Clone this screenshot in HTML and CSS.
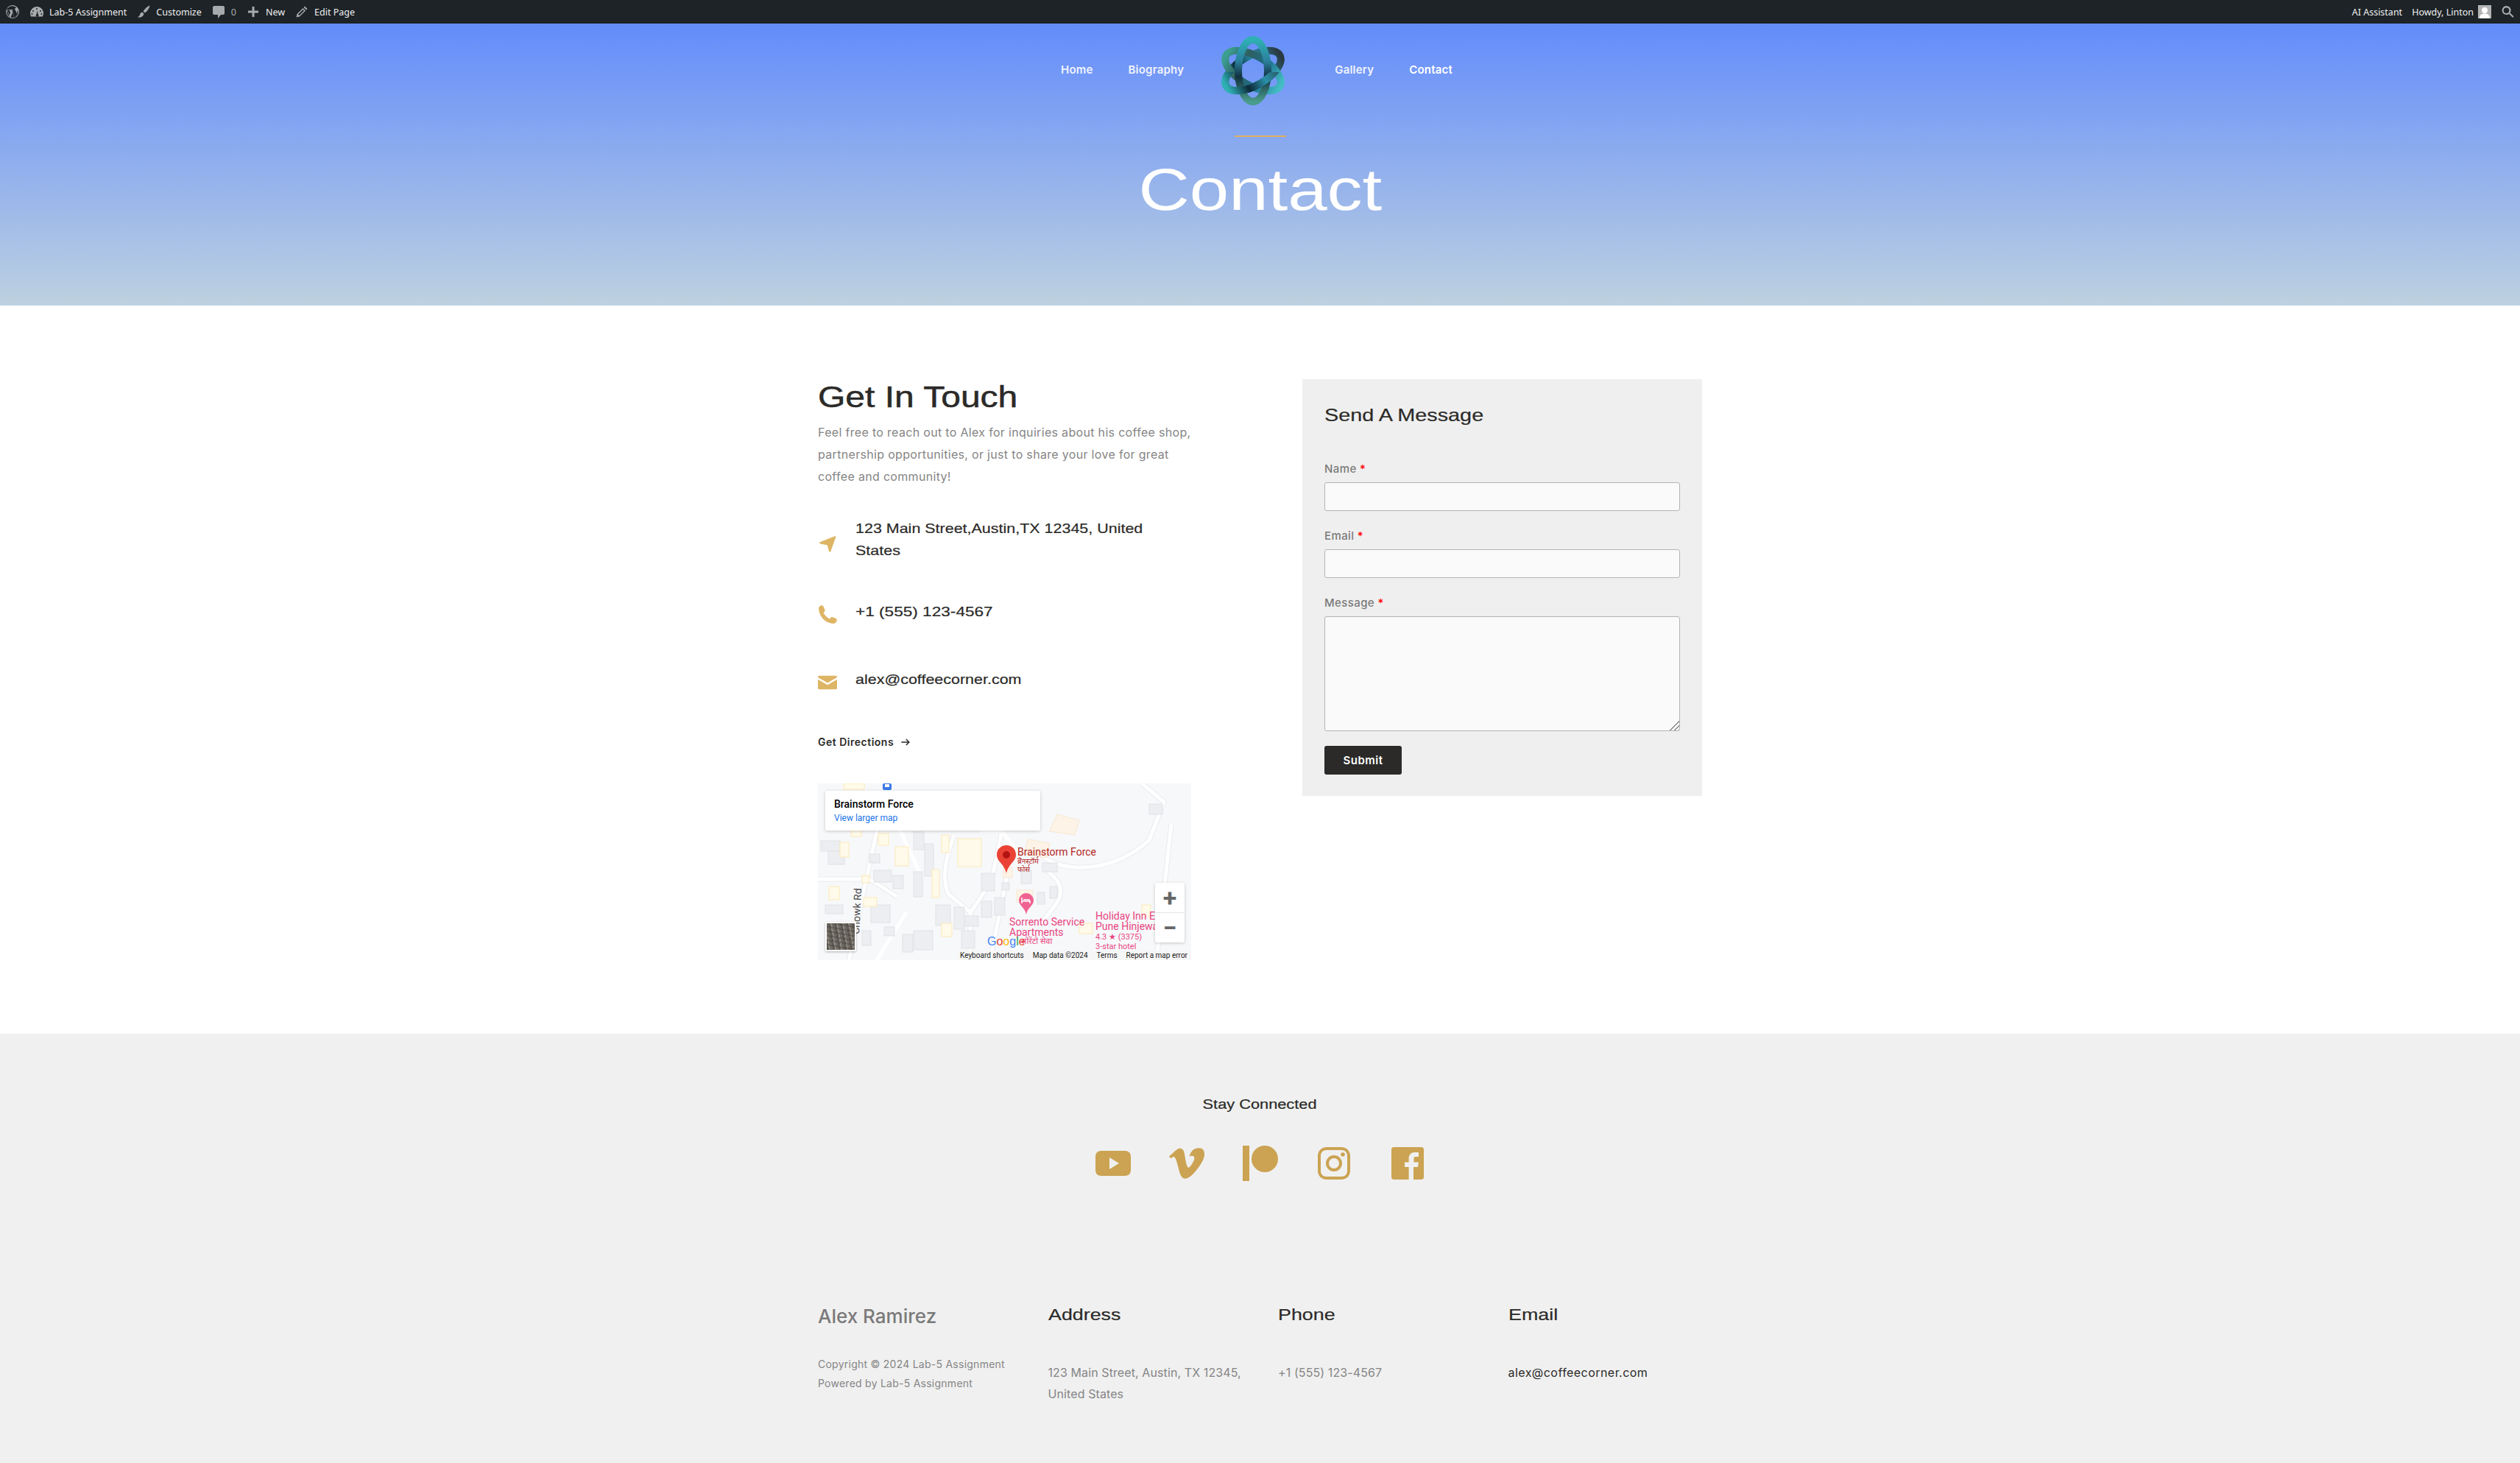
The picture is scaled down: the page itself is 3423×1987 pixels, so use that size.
FILE: index.html
```html
<!DOCTYPE html>
<html lang="en">
<head>
    <meta charset="UTF-8">
    <meta name="viewport" content="width=device-width, initial-scale=1.0">
    <title>Contact</title>
    <link rel="stylesheet" href="styles.css">
</head>
<body>
    <div class="adminbar">
        <div class="admin-group">
            <svg class="wp-logo" viewBox="0 0 20 20"><path d="M10 1a9 9 0 1 0 0 18 9 9 0 0 0 0-18zm0 1.200c2 0 3.900.8 5.300 2-1.200 0-2 1-2 2.100 0 1 .6 1.800 1.200 2.800.5.800.9 1.800.9 3.200 0 1-.4 2.100-.9 3.700l-1.100 3.600-3.900-11.700.9-.1c.5-.1.400-.8-.1-.7l-2.500.1-2.500-.1c-.5 0-.6.700-.1.700l.8.1 1.200 3.200-1.700 5-2.800-8.200.9-.1c.5-.1.400-.8-.1-.7l-2.400.1C4.800 3.500 7.200 2.200 10 2.200zM2.200 10c0-1.100.2-2.200.7-3.200l3.700 10.200A7.800 7.800 0 0 1 2.200 10zm7.900 1l2.400 6.500a7.800 7.800 0 0 1-4.900.1zm7-4.200a7.800 7.800 0 0 1-2.900 9.800l2.400-6.900c.4-1.100.6-2 .6-2.800l-.1-.1z"/></svg>
            <span class="admin-item">
                <svg class="admin-icon" viewBox="0 0 20 20"><path d="M10 3a9 9 0 0 0-9 9c0 1.700.4 3.200 1.200 4.500h15.600A9 9 0 0 0 10 3zm0 2a1 1 0 1 1 0 2 1 1 0 0 1 0-2zM5 8a1 1 0 1 1 0 2 1 1 0 0 1 0-2zm10 0a1 1 0 1 1 0 2 1 1 0 0 1 0-2zM3.500 12a1 1 0 1 1 0 2 1 1 0 0 1 0-2zm13 0a1 1 0 1 1 0 2 1 1 0 0 1 0-2zM11 8l.5 5.200a1.800 1.800 0 1 1-2 .2z"/></svg>
                Lab-5 Assignment
            </span>
            <span class="admin-item">
                <svg class="admin-icon" viewBox="0 0 20 20"><path d="M18.500 1.500c-3 1-7 4.500-9 8l2.500 2c3-2.500 6-6.500 6.500-10zM8.500 10.500c-2 .3-3 1.500-3.500 3.500-.3 1.500-1.500 2.500-3 3 3 1.500 7 .5 8.500-4z"/></svg>
                Customize
            </span>
            <span class="admin-item">
                <svg class="admin-icon" viewBox="0 0 20 20"><path d="M4 2h12c1 0 2 1 2 2v8c0 1-1 2-2 2h-3l-4 5v-5H4c-1 0-2-1-2-2V4c0-1 1-2 2-2z"/></svg>
                <span class="admin-count">0</span>
            </span>
            <span class="admin-item">
                <svg class="admin-icon" viewBox="0 0 20 20"><path d="M8.500 3h3v5.500H17v3h-5.500V17h-3v-5.500H3v-3h5.500z"/></svg>
                New
            </span>
            <span class="admin-item">
                <svg class="admin-icon" viewBox="0 0 20 20"><path d="M14 2.500l3.500 3.500-1.500 1.500L12.500 4zM11.500 5l3.500 3.500-8 8-4.500 1 1-4.500zM5 13.500l1.500 1.500 6.500-6.500-1.500-1.500z" fill-rule="evenodd"/></svg>
                Edit Page
            </span>
        </div>
        <div class="admin-group">
            <span class="admin-item">AI Assistant</span>
            <span class="admin-item howdy">Howdy, Linton
                <svg class="avatar" viewBox="0 0 18 18"><rect width="18" height="18" fill="#b4b4b4"/><circle cx="9" cy="7" r="4" fill="#fff"/><path d="M2 18c0-5 3-6.500 7-6.500s7 1.500 7 6.500z" fill="#fff"/></svg>
            </span>
            <svg class="admin-icon search" viewBox="0 0 20 20"><path d="M12.100 12.900a6 6 0 1 1 1.400-1.400l4.500 4.200a1 1 0 0 1-1.500 1.600zM8.500 12a3.800 3.800 0 1 0 0-7.600 3.800 3.800 0 0 0 0 7.600z" fill-rule="evenodd"/></svg>
        </div>
    </div>

    <header class="hero">
        <nav class="main-nav">
            <a href="#">Home</a>
            <a href="#">Biography</a>
            <svg class="logo" viewBox="0 0 92 96">
                <defs>
                    <linearGradient id="knotA" x1="0" y1="0" x2="0" y2="1">
                        <stop offset="0" stop-color="#2fb0b5"/>
                        <stop offset="0.35" stop-color="#2a7f9c"/>
                        <stop offset="0.6" stop-color="#12303f"/>
                        <stop offset="1" stop-color="#4a9c8c"/>
                    </linearGradient>
                    <linearGradient id="knotB" x1="0" y1="0" x2="0" y2="1">
                        <stop offset="0" stop-color="#3c9f92"/>
                        <stop offset="0.3" stop-color="#2e5f60"/>
                        <stop offset="0.65" stop-color="#1c6f8c"/>
                        <stop offset="1" stop-color="#43bcc4"/>
                    </linearGradient>
                    <linearGradient id="knotC" x1="0" y1="0" x2="0" y2="1">
                        <stop offset="0" stop-color="#2a3a42"/>
                        <stop offset="0.4" stop-color="#2a8fa8"/>
                        <stop offset="0.7" stop-color="#0d2a38"/>
                        <stop offset="1" stop-color="#2fb0b5"/>
                    </linearGradient>
                    <clipPath id="knotClip">
                        <rect x="0" y="50" width="92" height="46"/>
                    </clipPath>
                </defs>
                <g fill="none" stroke-width="10">
                    <ellipse cx="46" cy="48" rx="20" ry="42" stroke="url(#knotC)" transform="rotate(60 46 48)"/>
                    <ellipse cx="46" cy="48" rx="20" ry="42" stroke="url(#knotB)" transform="rotate(-60 46 48)"/>
                    <ellipse cx="46" cy="48" rx="20" ry="42" stroke="url(#knotA)"/>
                    <g clip-path="url(#knotClip)">
                        <ellipse cx="46" cy="48" rx="20" ry="42" stroke="url(#knotC)" transform="rotate(60 46 48)"/>
                    </g>
                </g>
            </svg>
            <a href="#" class="after-logo">Gallery</a>
            <a href="#" class="current">Contact</a>
        </nav>
        <div class="hero-line"></div>
        <h1 class="hero-title">Contact</h1>
    </header>

    <main class="contact">
        <section class="contact-left">
            <h2 class="touch-title">Get In Touch</h2>
            <p class="touch-text">Feel free to reach out to Alex for inquiries about his coffee shop,<br>partnership opportunities, or just to share your love for great<br>coffee and community!</p>

            <div class="info-row row-address">
                <svg class="info-icon" viewBox="0 0 24 24"><path d="M3 10.500L21.500 3 15 21l-2.500-8.500z" stroke-width="2" stroke-linejoin="round"/></svg>
                <div class="info-text">123 Main Street,Austin,TX 12345, United<br>States</div>
            </div>
            <div class="info-row row-phone">
                <svg class="info-icon" viewBox="0 0 24 24"><path d="M1 4C1 2 2.500.6 4.500.3c1-.1 2 .3 2.400 1.200l1.800 4c.4.9.2 1.800-.5 2.500L7 9.500c1.300 3 4 5.600 7.500 7.500l1.600-1.600c.7-.7 1.600-.9 2.500-.5l4 1.800c.9.400 1.400 1.300 1.200 2.300-.3 2.200-2 4-4.300 4C9.500 23 1 13.500 1 4z"/></svg>
                <div class="info-text">+1 (555) 123-4567</div>
            </div>
            <div class="info-row row-email">
                <svg class="info-icon" viewBox="0 0 24 24"><path d="M1.500 3.500h21c.8 0 1.500.7 1.500 1.500v.5l-12 7-12-7V5c0-.8.700-1.500 1.500-1.500zM0 8l12 7 12-7v11c0 .8-.7 1.500-1.500 1.500h-21C.7 20.500 0 19.800 0 19z"/></svg>
                <div class="info-text">alex@coffeecorner.com</div>
            </div>

            <a href="#" class="directions">Get Directions
                <svg viewBox="0 0 16 16"><path d="M1.500 8h12M9 3.500L13.500 8 9 12.500" fill="none" stroke="#2b2b2b" stroke-width="1.700"/></svg>
            </a>

            <div class="map">
                <svg class="map-svg" viewBox="0 0 507 240">
                    <rect width="507" height="240" fill="#f7f8fa"/>
                    <!-- roads -->
                    <g fill="none" stroke="#e9ebee" stroke-width="7">
                        <path d="M82 55L42 240"/>
                        <path d="M0 130h70l38 24"/>
                        <path d="M185 70c-10 28-18 55-8 80l30 25v65"/>
                        <path d="M207 175c15-20 28-40 32-58 4-22 14-50 8-62"/>
                        <path d="M258 120l-24 120"/>
                        <path d="M310 118c40 28 10 48-10 76"/>
                        <path d="M300 95c30 28 100 28 150-18l20-52-30-25"/>
                        <path d="M480 55l-20 185"/>
                    </g>
                    <g fill="none" stroke="#fff" stroke-width="5">
                        <path d="M82 55L42 240"/>
                        <path d="M0 130h70l38 24"/>
                        <path d="M185 70c-10 28-18 55-8 80l30 25v65"/>
                        <path d="M207 175c15-20 28-40 32-58 4-22 14-50 8-62"/>
                        <path d="M258 120l-24 120"/>
                        <path d="M310 118c40 28 10 48-10 76"/>
                        <path d="M300 95c30 28 100 28 150-18l20-52-30-25"/>
                        <path d="M480 55l-20 185"/>
                        <path d="M140 125l-30-65M120 175l-40 65"/>
                        <path d="M220 65h30l20 28"/>
                    </g>
                    <!-- plain buildings -->
                    <g fill="#eceef1" stroke="#dfe1e5" stroke-width="1">
                        <rect x="4" y="78" width="26" height="14"/><rect x="14" y="92" width="22" height="18"/>
                        <rect x="76" y="118" width="24" height="16"/><rect x="72" y="165" width="26" height="24"/>
                        <rect x="130" y="120" width="12" height="34"/><rect x="145" y="82" width="12" height="44"/>
                        <rect x="222" y="122" width="18" height="24"/><rect x="222" y="160" width="14" height="22"/>
                        <rect x="240" y="155" width="14" height="24"/><rect x="200" y="180" width="18" height="14"/>
                        <rect x="185" y="168" width="14" height="30"/><rect x="160" y="165" width="20" height="28"/>
                        <rect x="130" y="200" width="26" height="26"/><rect x="115" y="205" width="14" height="24"/>
                        <rect x="195" y="200" width="18" height="24"/><rect x="305" y="108" width="20" height="12"/>
                        <rect x="298" y="148" width="10" height="16"/><rect x="315" y="140" width="10" height="16"/>
                        <rect x="450" y="28" width="18" height="14"/><rect x="150" y="15" width="14" height="38"/>
                        <rect x="130" y="66" width="14" height="24"/><rect x="10" y="165" width="24" height="12"/>
                        <rect x="70" y="96" width="14" height="12"/><rect x="102" y="125" width="14" height="18"/>
                        <rect x="276" y="118" width="14" height="18"/><rect x="60" y="200" width="12" height="20"/>
                        <rect x="90" y="195" width="14" height="12"/><rect x="250" y="135" width="10" height="10"/>
                    </g>
                    <!-- yellow buildings -->
                    <g fill="#fffae9" stroke="#fbe9b8" stroke-width="1">
                        <rect x="190" y="75" width="32" height="38"/><rect x="105" y="86" width="18" height="26"/>
                        <rect x="82" y="68" width="14" height="16"/><rect x="30" y="80" width="12" height="20"/>
                        <rect x="155" y="117" width="10" height="38"/><rect x="168" y="70" width="10" height="24"/>
                        <rect x="62" y="155" width="18" height="12"/><rect x="15" y="140" width="14" height="18"/>
                        <rect x="168" y="190" width="14" height="18"/><rect x="440" y="165" width="12" height="16"/>
                        <rect x="355" y="190" width="18" height="14"/><rect x="35" y="0" width="28" height="8"/>
                        <rect x="45" y="62" width="14" height="10"/><rect x="60" y="125" width="10" height="10"/>
                    </g>
                    <g fill="#fdf3e6" stroke="#f7e8d3" stroke-width="1">
                        <path d="M325 42l30 8-6 20-35-5zM285 76l-5 20 30 5 5-20z"/>
                        <rect x="252" y="114" width="12" height="14"/>
                        <rect x="270" y="145" width="22" height="16"/>
                    </g>

                    <!-- pins and labels -->
                    <path d="M256 84c-7.500 0-13 5.500-13 13 0 9 10 12 13 25 3-13 13-16 13-25 0-7.500-5.500-13-13-13z" fill="#ea4335"/>
                    <circle cx="256" cy="97" r="5" fill="#b31412"/>
                    <text class="map-red" x="271" y="98">Brainstorm Force</text>
                    <text class="map-red-small" x="271" y="109">ब्रेनस्टॉर्म</text>
                    <text class="map-red-small" x="271" y="120">फोर्स</text>

                    <path d="M283 149c-5.500 0-10 4.500-10 10 0 7 8 9 10 19 2-10 10-12 10-19 0-5.500-4.500-10-10-10z" fill="#f06292"/>
                    <path d="M277 155v8M277 160h11v3M279 158h8v2" fill="none" stroke="#fff" stroke-width="1.500"/>
                    <text class="map-pink" x="260" y="193">Sorrento Service</text>
                    <text class="map-pink" x="260" y="207">Apartments</text>
                    <text class="map-pink-small" x="276" y="218">सोरेंटो सेवा</text>
                    <text class="map-pink" x="377" y="185">Holiday Inn E</text>
                    <text class="map-pink" x="377" y="199">Pune Hinjewa</text>
                    <text class="map-pink-small" x="377" y="212">4.3 ★ (3375)</text>
                    <text class="map-pink-small" x="377" y="225">3-star hotel</text>
                    <text class="map-road" transform="translate(56 205) rotate(-87)">Chowk Rd</text>
                    <rect x="88" y="0" width="12" height="9" rx="2" fill="#3b78e7"/>
                    <rect x="91" y="1" width="6" height="4" fill="#fff"/>
                </svg>
                <div class="map-card">
                    <strong>Brainstorm Force</strong>
                    <a href="#">View larger map</a>
                </div>
                <div class="map-zoom">
                    <span>+</span>
                    <span>−</span>
                </div>
                <div class="map-thumb"></div>
                <div class="map-google"><b class="g-blue">G</b><b class="g-red">o</b><b class="g-yellow">o</b><b class="g-blue">g</b><b class="g-green">l</b><b class="g-red">e</b></div>
                <div class="map-foot">
                    <span>Keyboard shortcuts</span>
                    <span>Map data ©2024</span>
                    <span>Terms</span>
                    <span>Report a map error</span>
                </div>
            </div>
        </section>

        <section class="contact-form">
            <h3 class="form-title">Send A Message</h3>
            <form>
                <label for="name">Name <em>*</em></label>
                <input type="text" id="name">
                <label for="email">Email <em>*</em></label>
                <input type="email" id="email">
                <label for="message">Message <em>*</em></label>
                <textarea id="message"></textarea>
                <button type="submit" class="submit-btn">Submit</button>
            </form>
        </section>
    </main>

    <footer class="site-footer">
        <h4 class="stay-title">Stay Connected</h4>
        <div class="socials">
            <svg viewBox="0 0 48 48"><path fill-rule="evenodd" d="M8 7h32c5 0 8 3 8 8v18c0 5-3 8-8 8H8c-5 0-8-3-8-8V15c0-5 3-8 8-8zm11 9v16l13-8z"/></svg>
            <svg viewBox="0 0 24 24"><path d="M23.977 6.417c-.105 2.338-1.739 5.543-4.894 9.609-3.268 4.247-6.026 6.370-8.290 6.370-1.409 0-2.578-1.294-3.553-3.881l-1.918-7.114c-.719-2.584-1.488-3.878-2.312-3.878-.179 0-.806.378-1.881 1.132L0 7.223c1.185-1.044 2.351-2.084 3.501-3.128C5.080 2.701 6.266 1.974 7.055 1.900 8.920 1.721 10.073 3 10.504 5.731c.465 2.947.789 4.780.971 5.500.539 2.448 1.131 3.670 1.776 3.670.502 0 1.256-.796 2.263-2.385 1.004-1.589 1.540-2.797 1.612-3.628.144-1.371-.395-2.061-1.614-2.061-.574 0-1.167.121-1.777.391 1.186-3.868 3.434-5.757 6.762-5.637 2.473.060 3.628 1.664 3.493 4.797z"/></svg>
            <svg viewBox="0 0 48 48"><rect x="0" y="0" width="9" height="48"/><circle cx="30" cy="18" r="18"/></svg>
            <svg viewBox="0 0 48 48"><path fill-rule="evenodd" d="M14 2h20c7 0 12 5 12 12v20c0 7-5 12-12 12H14C7 46 2 41 2 34V14C2 7 7 2 14 2zm0 4c-5 0-8 3-8 8v20c0 5 3 8 8 8h20c5 0 8-3 8-8V14c0-5-3-8-8-8z"/><path fill-rule="evenodd" d="M24 13a11 11 0 1 1 0 22 11 11 0 0 1 0-22zm0 4a7 7 0 1 0 0 14 7 7 0 0 0 0-14z"/><circle cx="36" cy="12" r="2.800"/></svg>
            <svg viewBox="0 0 24 24"><path d="M21.500 1h-19C1.700 1 1 1.700 1 2.500v19c0 .8.700 1.500 1.500 1.500h10.300v-8.500H10v-3.300h2.800V8.800c0-2.800 1.700-4.300 4.200-4.300 1.200 0 2.200.1 2.500.1v2.900h-1.700c-1.400 0-1.600.6-1.600 1.600v2.100h3.200l-.4 3.300H16V23h5.500c.8 0 1.500-.7 1.500-1.500v-19c0-.8-.7-1.500-1.500-1.500z"/></svg>
        </div>
        <div class="footer-cols">
            <div class="footer-col">
                <div class="footer-brand">Alex Ramirez</div>
                <p class="copy">Copyright © 2024 Lab-5 Assignment<br>Powered by Lab-5 Assignment</p>
            </div>
            <div class="footer-col">
                <h5 class="footer-head">Address</h5>
                <p class="footer-text">123 Main Street, Austin, TX 12345,<br>United States</p>
            </div>
            <div class="footer-col">
                <h5 class="footer-head">Phone</h5>
                <p class="footer-text">+1 (555) 123-4567</p>
            </div>
            <div class="footer-col">
                <h5 class="footer-head">Email</h5>
                <p class="footer-text dark">alex@coffeecorner.com</p>
            </div>
        </div>
    </footer>
</body>
</html>
```

FILE: styles.css
```css
* {
    box-sizing: border-box;
}
body {
    margin: 0;
    font-family: Inter, "Open Sans", sans-serif;
    background: #fff;
    color: #2b2a28;
}

/* admin bar */
.adminbar {
    display: flex;
    justify-content: space-between;
    align-items: center;
    height: 32px;
    background: #1d2327;
    color: #f0f0f1;
    font-family: "Noto Sans", sans-serif;
    font-size: 12.5px;
    padding: 0 7px;
}
.admin-group {
    display: flex;
    align-items: center;
}
.admin-item {
    display: flex;
    align-items: center;
    gap: 7px;
    margin-left: 13px;
    white-space: nowrap;
}
.admin-icon {
    width: 20px;
    height: 20px;
    fill: #a7aaad;
}
.wp-logo {
    width: 20px;
    height: 20px;
    fill: #a7aaad;
}
.admin-count {
    color: #a7aaad;
}
.avatar {
    width: 18px;
    height: 18px;
    margin-left: -1px;
}
.search {
    margin-left: 12px;
}

/* hero */
.hero {
    height: 383px;
    background: linear-gradient(180deg, #638cfb 0%, #bdd1e0 100%);
    color: #fff;
    padding-top: 16px;
}
.main-nav {
    display: flex;
    justify-content: center;
    align-items: center;
    gap: 48px;
    padding-right: 9px;
    height: 96px;
}
.main-nav a {
    color: #f0f3fd;
    text-decoration: none;
    font-size: 15px;
    font-weight: 600;
    letter-spacing: 0.2px;
    margin-bottom: 3px;
}
.main-nav a.current {
    color: #fff;
}
.main-nav a.after-logo {
    margin-left: 17px;
}
.logo {
    width: 92px;
    height: 96px;
}
.hero-line {
    width: 70px;
    height: 2px;
    background: #e0b060;
    margin: 40px auto 0;
}
.hero-title {
    width: fit-content;
    margin: 26px auto 0;
    font-family: "Liberation Sans", Arial, sans-serif;
    font-size: 80px;
    line-height: 92px;
    font-weight: 400;
    transform: scaleX(1.2);
}

/* contact */
.contact {
    display: flex;
    justify-content: space-between;
    width: 1201px;
    margin: 0 auto;
    padding: 100px 0;
    height: 989px;
}
.contact-left {
    width: 507px;
}
.touch-title {
    margin: 0;
    font-family: "Liberation Sans", Arial, sans-serif;
    font-size: 40px;
    line-height: 48px;
    font-weight: 400;
    -webkit-text-stroke: 0.5px #2b2a28;
    transform: scaleX(1.2);
    transform-origin: left center;
}
.touch-text {
    margin: 9px 0 0;
    font-size: 16px;
    line-height: 30px;
    font-weight: 400;
    letter-spacing: 0.32px;
    color: #858585;
    white-space: nowrap;
}
.info-row {
    display: flex;
    align-items: center;
    gap: 25px;
}
.row-address {
    margin-top: 41px;
}
.row-phone {
    margin-top: 53px;
    align-items: flex-start;
}
.row-email {
    margin-top: 60px;
    align-items: flex-start;
}
.info-icon {
    width: 26px;
    height: 26px;
    flex: none;
    fill: #deb565;
    stroke: #deb565;
    stroke-width: 0;
}
.row-address .info-icon {
    stroke-width: 2;
    margin-top: 12px;
}
.row-phone .info-icon,
.row-email .info-icon {
    margin-top: 6px;
}
.info-text {
    font-family: "Liberation Sans", Arial, sans-serif;
    font-size: 19px;
    line-height: 30px;
    -webkit-text-stroke: 0.2px #2b2a28;
    white-space: nowrap;
    transform: scaleX(1.13);
    transform-origin: left center;
}
.row-phone .info-text {
    transform: scaleX(1.19);
}
.directions {
    display: flex;
    align-items: center;
    gap: 9px;
    margin-top: 58px;
    color: #2b2a28;
    text-decoration: none;
    font-size: 14px;
    font-weight: 600;
    letter-spacing: 0.5px;
    line-height: 20px;
}
.directions svg {
    width: 14px;
    height: 14px;
}

/* map */
.map {
    position: relative;
    width: 507px;
    height: 240px;
    margin-top: 46px;
    overflow: hidden;
    font-family: Roboto, sans-serif;
}
.map-svg {
    display: block;
    width: 507px;
    height: 240px;
    font-family: Roboto, "Noto Sans", sans-serif;
}
.map-red {
    font-size: 14px;
    fill: #b3261e;
}
.map-red-small {
    font-size: 10px;
    fill: #b3261e;
}
.map-pink {
    font-size: 14px;
    fill: #e8457f;
}
.map-pink-small {
    font-size: 11px;
    fill: #e8457f;
}
.map-road {
    font-size: 14px;
    fill: #4a4a4a;
}
.map-card {
    position: absolute;
    top: 10px;
    left: 10px;
    width: 292px;
    height: 54px;
    background: #fff;
    box-shadow: 0 1px 4px rgba(0, 0, 0, 0.2);
    border-radius: 2px;
    padding: 10px 12px;
    display: flex;
    flex-direction: column;
    gap: 3px;
}
.map-card strong {
    font-size: 14px;
    font-weight: 500;
    line-height: 17px;
    color: #000;
}
.map-card a {
    font-size: 12px;
    line-height: 15px;
    color: #1a73e8;
    text-decoration: none;
}
.map-zoom {
    position: absolute;
    top: 135px;
    left: 458px;
    width: 40px;
    height: 81px;
    background: #fff;
    box-shadow: 0 1px 4px rgba(0, 0, 0, 0.2);
    border-radius: 2px;
    display: flex;
    flex-direction: column;
    color: #666;
    font-size: 34px;
    font-weight: 700;
    text-align: center;
}
.map-zoom span {
    flex: 1;
    line-height: 40px;
}
.map-zoom span:first-child {
    border-bottom: 1px solid #e6e6e6;
}
.map-thumb {
    position: absolute;
    top: 188px;
    left: 10px;
    width: 42px;
    height: 40px;
    border: 2px solid #fff;
    border-radius: 2px;
    background:
        repeating-linear-gradient(10deg, rgba(60, 55, 50, 0.35) 0 2px, transparent 2px 6px),
        repeating-linear-gradient(80deg, #5f5a55 0 3px, #8d8880 3px 5px, #6f6a63 5px 8px);
    box-shadow: 0 1px 3px rgba(0, 0, 0, 0.3);
}
.map-google {
    position: absolute;
    top: 206px;
    left: 230px;
    font-family: "Liberation Sans", sans-serif;
    font-size: 16px;
    line-height: 18px;
}
.map-google b {
    font-weight: 400;
}
.g-blue { color: #4285f4; }
.g-red { color: #ea4335; }
.g-yellow { color: #fbbc05; }
.g-green { color: #34a853; }
.map-foot {
    position: absolute;
    right: 0;
    bottom: 0;
    left: 190px;
    height: 13px;
    display: flex;
    justify-content: space-between;
    padding: 0 5px 0 3px;
    background: rgba(245, 245, 245, 0.8);
    font-size: 10px;
    line-height: 13px;
    color: #222;
    white-space: nowrap;
}

/* form */
.contact-form {
    width: 543px;
    height: 566px;
    background: #efefef;
    padding: 30px;
}
.form-title {
    margin: 4px 0 0;
    font-family: "Liberation Sans", Arial, sans-serif;
    font-size: 24px;
    line-height: 30px;
    font-weight: 400;
    -webkit-text-stroke: 0.2px #2b2a28;
    transform: scaleX(1.2);
    transform-origin: left center;
}
.contact-form form {
    margin-top: 48px;
}
.contact-form label {
    display: block;
    font-size: 15px;
    font-weight: 500;
    letter-spacing: 0.4px;
    line-height: 20px;
    color: #7a7a7a;
    margin-bottom: 8px;
}
.contact-form label em {
    font-style: normal;
    color: #f00;
}
.contact-form input,
.contact-form textarea {
    display: block;
    width: 100%;
    background: #fafafa;
    border: 1px solid #b4b4b4;
    border-radius: 3px;
    padding: 8px;
    margin-bottom: 24px;
}
.contact-form input {
    height: 39px;
}
.contact-form textarea {
    height: 156px;
    margin-bottom: 20px;
}
.contact-form textarea::-webkit-resizer {
    background:
        linear-gradient(135deg, #fafafa 50%, transparent 50%),
        repeating-linear-gradient(135deg, #8a8a8a 0 1px, transparent 1px 4px);
}
.submit-btn {
    display: block;
    width: 105px;
    height: 39px;
    border: 0;
    border-radius: 3px;
    background: #2b2a28;
    color: #fff;
    font-family: Inter, sans-serif;
    font-size: 15px;
    font-weight: 600;
    letter-spacing: 0.5px;
}

/* footer */
.site-footer {
    background: #f0f0f0;
    height: 583px;
    padding-top: 82px;
}
.stay-title {
    width: fit-content;
    margin: 0 auto;
    font-family: "Liberation Sans", Arial, sans-serif;
    font-size: 18px;
    line-height: 28px;
    font-weight: 400;
    -webkit-text-stroke: 0.2px #2b2a28;
    transform: scaleX(1.21);
}
.socials {
    display: flex;
    justify-content: center;
    gap: 52px;
    margin-top: 42px;
}
.socials svg {
    width: 48px;
    height: 48px;
    fill: #cba352;
}
.footer-cols {
    display: flex;
    width: 1201px;
    margin: 167px auto 0;
}
.footer-col {
    flex: none;
    width: 312.5px;
}
.footer-brand {
    margin-top: 1px;
    font-size: 26px;
    line-height: 32px;
    font-weight: 500;
    color: #7a7a7a;
}
.copy {
    margin: 36px 0 0;
    font-size: 14px;
    line-height: 26px;
    font-weight: 400;
    letter-spacing: 0.25px;
    color: #858585;
}
.footer-head {
    margin: 0;
    font-family: "Liberation Sans", Arial, sans-serif;
    font-size: 22px;
    line-height: 30px;
    font-weight: 400;
    -webkit-text-stroke: 0.2px #2b2a28;
    transform: scaleX(1.22);
    transform-origin: left center;
}
.footer-text {
    margin: 49px 0 0;
    font-size: 16px;
    line-height: 29px;
    font-weight: 400;
    letter-spacing: 0.1px;
    color: #858585;
}
.footer-text.dark {
    color: #2b2a28;
    letter-spacing: 0.45px;
}
```
